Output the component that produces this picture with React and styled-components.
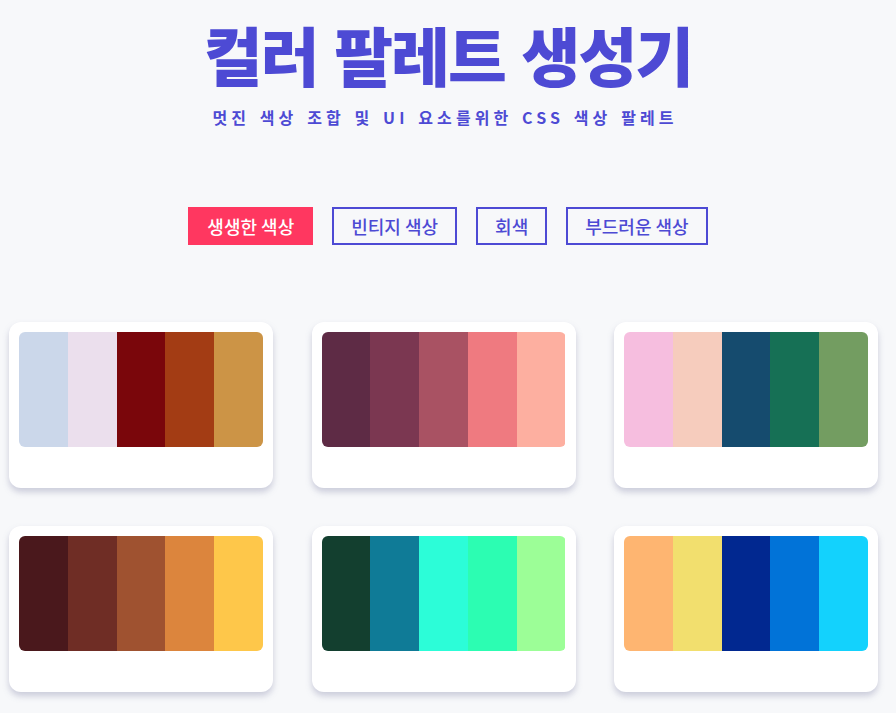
import React, { useState } from "react";
import styled, { createGlobalStyle } from "styled-components";

const GlobalStyle = createGlobalStyle`
  body {
    margin: 0;
    background: #f7f8fa;
    font-family: "Noto Sans CJK KR", "Noto Sans", sans-serif;
  }
`;

const Page = styled.div`
  display: flex;
  flex-direction: column;
  align-items: center;
  padding-top: 11px;
`;

const Title = styled.h1`
  margin: 0;
  font-size: 64px;
  font-weight: 900;
  line-height: 84px;
  color: #4d4ad4;
  letter-spacing: -2px;
  word-spacing: 4px;
`;

const Subtitle = styled.p`
  margin: 10px 6px 0 0;
  font-size: 16px;
  font-weight: 700;
  line-height: 24px;
  letter-spacing: 4.1px;
  word-spacing: 2px;
  color: #4d4ad4;
`;

const Filters = styled.div`
  display: flex;
  gap: 19px;
  margin-top: 78px;
`;

const FilterButton = styled.button`
  font-family: inherit;
  font-size: 18px;
  font-weight: 500;
  line-height: 22px;
  padding: 6px 17px;
  border: 2px solid ${p => (p.active ? "#ff3760" : "#4d4ad4")};
  background: ${p => (p.active ? "#ff3760" : "transparent")};
  color: ${p => (p.active ? "#fff" : "#4d4ad4")};
  cursor: pointer;
`;

const Grid = styled.div`
  align-self: stretch;
  display: grid;
  grid-template-columns: repeat(3, 264px);
  column-gap: 38.5px;
  row-gap: 38px;
  padding: 77px 0 30px 9px;
`;

const Card = styled.div`
  background: #fff;
  border-radius: 12px;
  padding: 10px 10px 41px;
  box-shadow: 0 4px 6px rgba(120, 124, 160, 0.35);
`;

const Swatches = styled.div`
  display: flex;
  height: 115px;
  border-radius: 6px;
  overflow: hidden;
`;

const Swatch = styled.div`
  flex: 1;
  background: ${p => p.color};
`;

const filters = ["생생한 색상", "빈티지 색상", "회색", "부드러운 색상"];

const palettes = [
  ["#cbd7ea", "#ebdfed", "#7a060b", "#a33c14", "#cc9446"],
  ["#5e2b45", "#7b3751", "#a95263", "#ef7a80", "#fdafa0"],
  ["#f6bedf", "#f6ccbd", "#154b6e", "#167055", "#739d61"],
  ["#4a181c", "#6f2d25", "#9f5230", "#dc853d", "#fec74a"],
  ["#133f2f", "#0f7b97", "#2cfdd8", "#2cfdb2", "#9cfe97"],
  ["#feb571", "#f2df6e", "#012890", "#0173d8", "#13d2fd"],
];

export default function App() {
  const [active, setActive] = useState(0);
  return (
    <Page>
      <GlobalStyle />
      <Title>컬러 팔레트 생성기</Title>
      <Subtitle>멋진 색상 조합 및 UI 요소를위한 CSS 색상 팔레트</Subtitle>
      <Filters>
        {filters.map((f, i) => (
          <FilterButton key={f} active={i === active} onClick={() => setActive(i)}>
            {f}
          </FilterButton>
        ))}
      </Filters>
      <Grid>
        {palettes.map((colors, i) => (
          <Card key={i}>
            <Swatches>
              {colors.map(c => (
                <Swatch key={c} color={c} />
              ))}
            </Swatches>
          </Card>
        ))}
      </Grid>
    </Page>
  );
}
